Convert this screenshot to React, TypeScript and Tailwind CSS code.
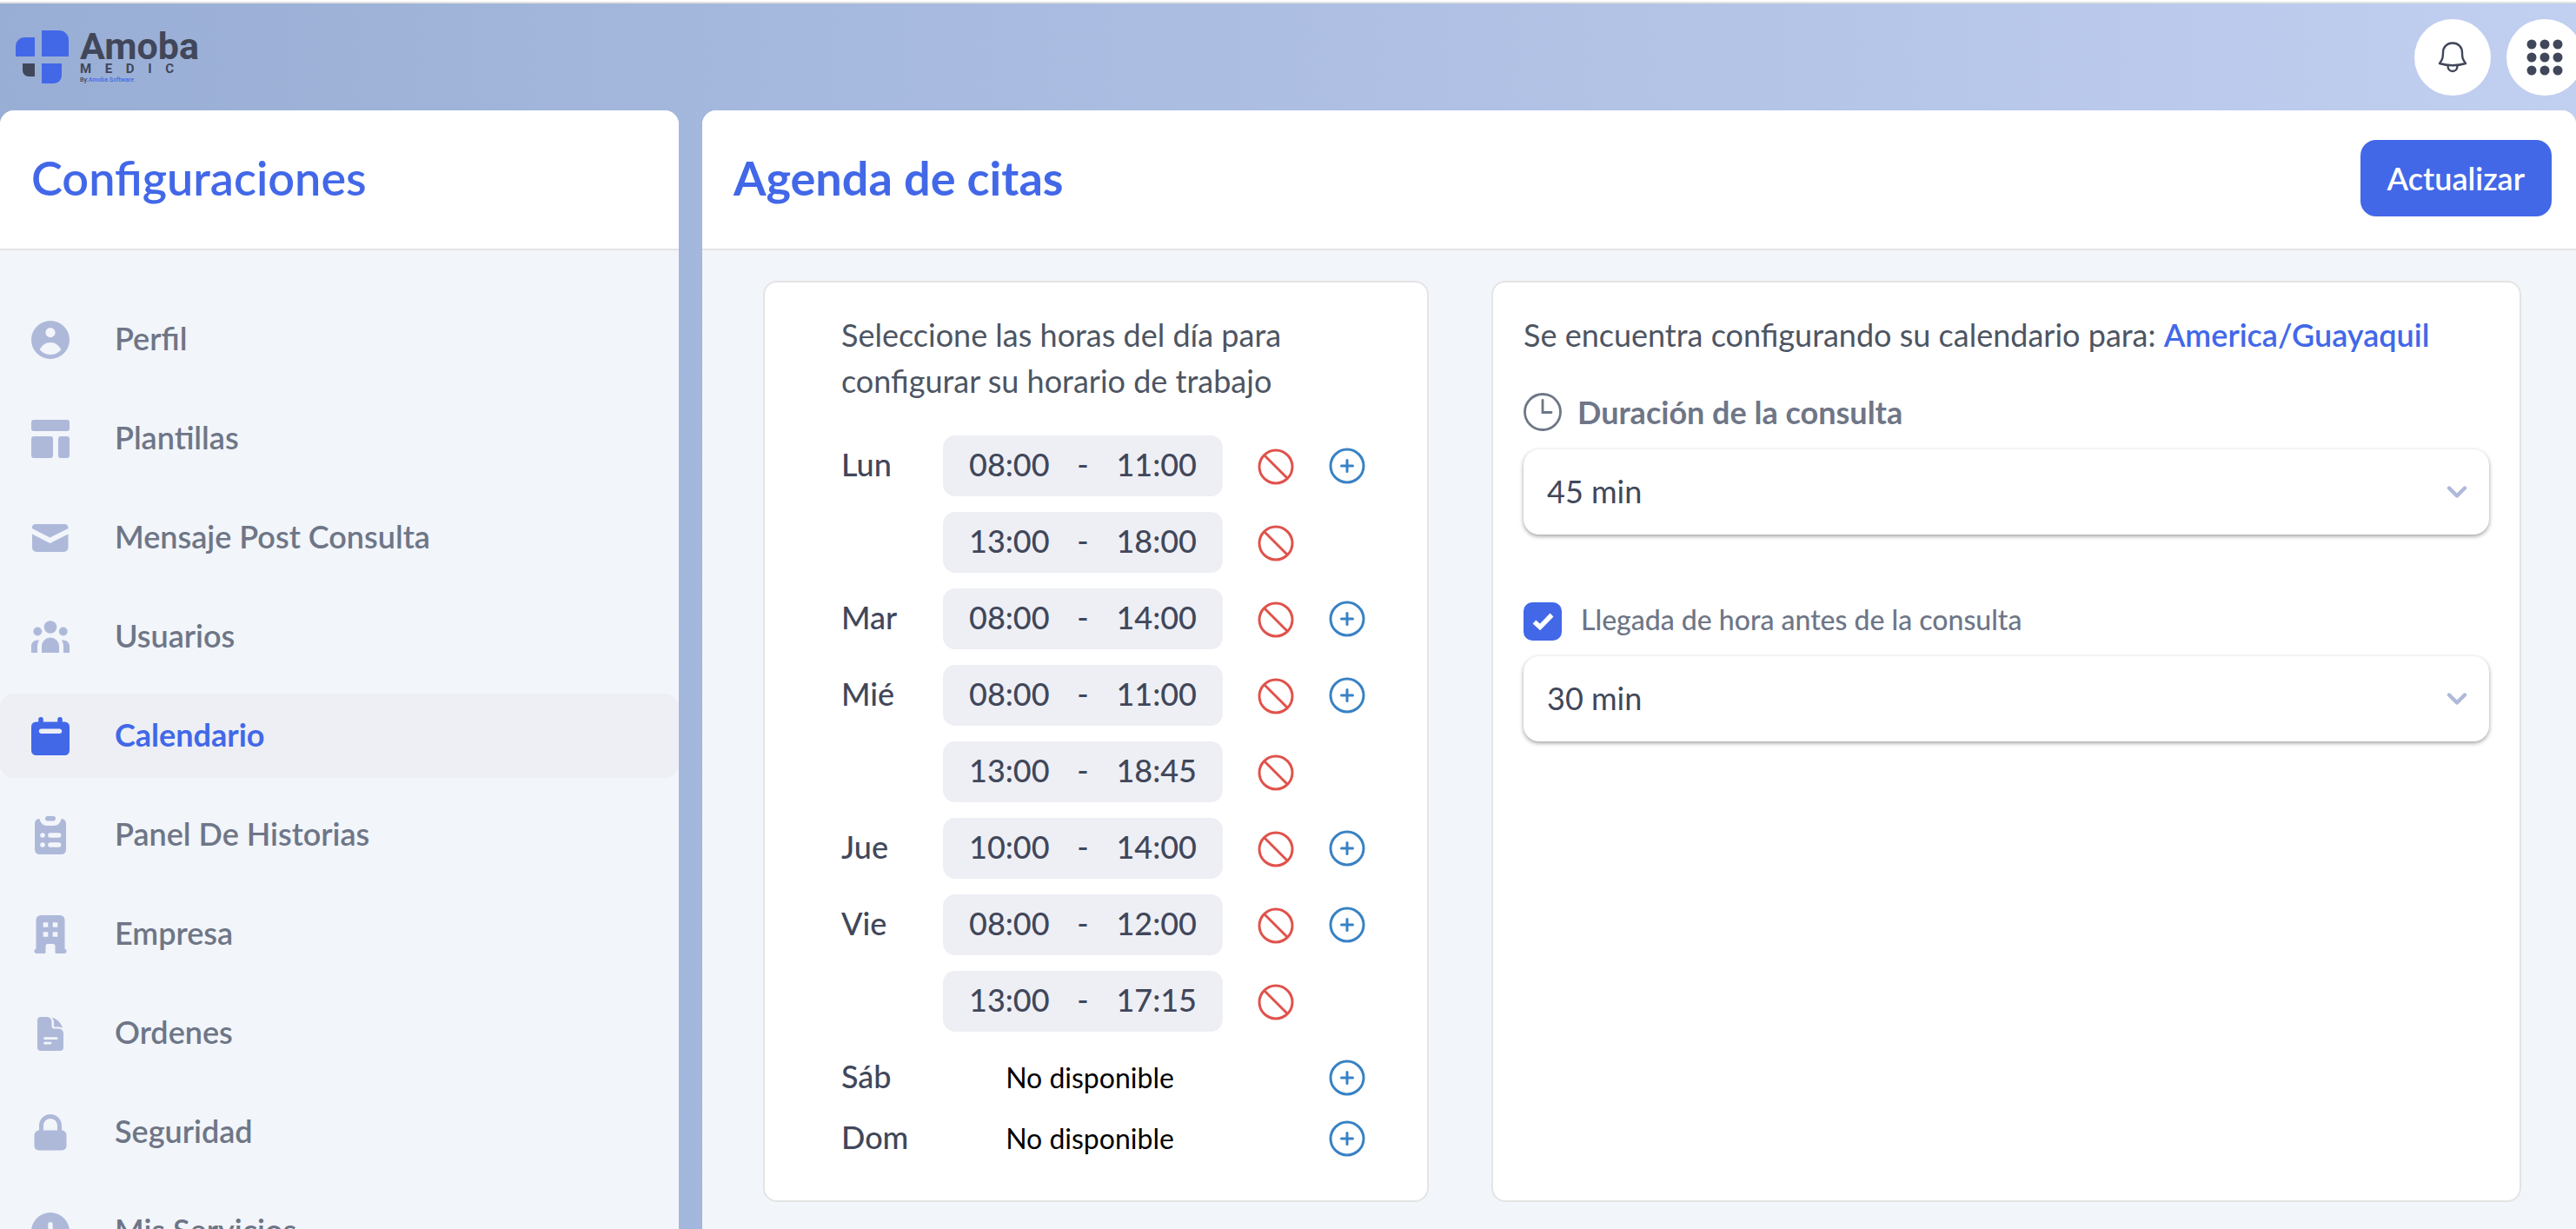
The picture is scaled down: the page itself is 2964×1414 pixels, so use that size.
import React, { useState } from "react";

type Slot = {
  start: string;
  end: string;
};

type Day = {
  name: string;
  slots: Slot[];
};

const initialDays: Day[] = [
  {
    name: "Lun",
    slots: [
      { start: "08:00", end: "11:00" },
      { start: "13:00", end: "18:00" },
    ],
  },
  { name: "Mar", slots: [{ start: "08:00", end: "14:00" }] },
  {
    name: "Mié",
    slots: [
      { start: "08:00", end: "11:00" },
      { start: "13:00", end: "18:45" },
    ],
  },
  { name: "Jue", slots: [{ start: "10:00", end: "14:00" }] },
  {
    name: "Vie",
    slots: [
      { start: "08:00", end: "12:00" },
      { start: "13:00", end: "17:15" },
    ],
  },
  { name: "Sáb", slots: [] },
  { name: "Dom", slots: [] },
];

const durations = ["15 min", "30 min", "45 min", "60 min"];

// Sidebar icons, all on a 44x44 grid
const icons = {
  profile: (
    <path
      fillRule="evenodd"
      d="M22 0a22 22 0 1 0 0 44a22 22 0 1 0 0-44zM22 8a5.500 5.500 0 1 1 0 11.200a5.500 5.500 0 1 1 0-11.200zM22 25c5.500 0 10 3.500 12.300 8.200c-3 3.600-7.300 5.800-12.300 5.800s-9.300-2.200-12.300-5.800c2.300-4.700 6.800-8.200 12.300-8.200z"
    />
  ),
  templates: (
    <>
      <rect x="0" y="0" width="44" height="13" rx="3" />
      <rect x="0" y="19" width="25" height="25" rx="3" />
      <rect x="31" y="19" width="13" height="25" rx="3" />
    </>
  ),
  mail: (
    <>
      <path d="M1 11v-1a4 4 0 0 1 4-4h33a4 4 0 0 1 4.500 4v1l-21 10.500z" />
      <path d="M1 17.500l20.500 10.500l21-10.500v15.500a5 5 0 0 1-5 5h-31.500a5 5 0 0 1-5-5z" />
    </>
  ),
  users: (
    <>
      <circle cx="22" cy="10.500" r="7.300" />
      <circle cx="7.300" cy="15.500" r="4.900" />
      <circle cx="36.700" cy="15.500" r="4.900" />
      <path d="M12 40v-7.500a10 10 0 0 1 20 0v7.500z" />
      <path d="M0 40v-7.500c0-4.500 4-7.500 9-6.800c-1.200 2-2 4.300-2 6.800v7.500z" />
      <path d="M44 40v-7.500c0-4.500-4-7.500-9-6.800c1.200 2 2 4.300 2 6.800v7.500z" />
    </>
  ),
  calendar: (
    <path
      fillRule="evenodd"
      d="M11 0a2.800 2.800 0 0 1 2.800 2.800v2.700h16.400v-2.700a2.800 2.800 0 0 1 5.600 0v2.700h2.700a5.500 5.500 0 0 1 5.500 5.500v27.500a5.500 5.500 0 0 1-5.500 5.500h-33a5.500 5.500 0 0 1-5.500-5.500v-27.500a5.500 5.500 0 0 1 5.500-5.500h2.700v-2.700a2.800 2.800 0 0 1 2.800-2.800zM11 13.500a2.800 2.800 0 0 0 0 5.500h22a2.800 2.800 0 0 0 0-5.500z"
    />
  ),
  histories: (
    <>
      <rect x="16" y="0" width="12" height="5.500" rx="2.750" />
      <path
        fillRule="evenodd"
        d="M9.500 3c.8 4.600 4 8 8.500 8h8c4.500 0 7.700-3.400 8.500-8c3.300 0 5.500 2.500 5.500 5.500v30a5.500 5.500 0 0 1-5.500 5.500h-25a5.500 5.500 0 0 1-5.500-5.500v-30c0-3 2.200-5.500 5.500-5.500zM13 19.200a2.800 2.800 0 1 0 0 5.600a2.800 2.800 0 1 0 0-5.600zM22 19.200a2.800 2.800 0 0 0 0 5.600h9.500a2.800 2.800 0 0 0 0-5.600zM13 30.200a2.800 2.800 0 1 0 0 5.600a2.800 2.800 0 1 0 0-5.600zM22 30.200a2.800 2.800 0 0 0 0 5.600h9.500a2.800 2.800 0 0 0 0-5.600z"
      />
    </>
  ),
  company: (
    <path
      fillRule="evenodd"
      d="M11 0h22a5.500 5.500 0 0 1 5.500 5.500v33.200a2.700 2.700 0 0 1 0 5.300h-9.500a1.500 1.500 0 0 1-1.500-1.500v-7a2.500 2.500 0 0 0-2.500-2.500h-6a2.500 2.500 0 0 0-2.500 2.500v7a1.500 1.500 0 0 1-1.500 1.500h-9.500a2.700 2.700 0 0 1 0-5.300v-33.200a5.500 5.500 0 0 1 5.500-5.500zM13.700 8.200v5.600h5.600v-5.600zM24.700 8.200v5.600h5.600v-5.600zM13.700 19.200v5.600h5.600v-5.600zM24.700 19.200v5.600h5.600v-5.600z"
    />
  ),
  orders: (
    <>
      <path
        fillRule="evenodd"
        d="M11 3h6c4 0 6.500 2 6.500 6v4.500a3 3 0 0 0 3 3h4.500c4 0 6 2.500 6 6v15.500a4 4 0 0 1-4 4h-22a4 4 0 0 1-4-4v-31a4 4 0 0 1 4-4zM15.500 26.300a1.400 1.400 0 0 0 0 2.800h13.500a1.400 1.400 0 0 0 0-2.800zM15.500 31.800a1.400 1.400 0 0 0 0 2.800h6.500a1.400 1.400 0 0 0 0-2.800z"
      />
      <path d="M23.500 3.500c6 1.500 11 6.500 12.500 12.500c-1.500-1-3-1.500-5-1.500h-3.500a1.500 1.500 0 0 1-1.500-1.500v-4c0-2.200-1-4-2.500-5.500z" />
    </>
  ),
  security: (
    <path
      fillRule="evenodd"
      d="M22 1c-7.200 0-13 5.800-13 13v5.500a5.500 5.500 0 0 0-5.500 5v13a5 5 0 0 0 5 5h27a5 5 0 0 0 5-5v-13a5.500 5.500 0 0 0-5.500-5v-5.500c0-7.200-5.800-13-13-13zM22 6c-4.400 0-8 3.600-8 8v5.500h16v-5.500c0-4.400-3.600-8-8-8z"
    />
  ),
  services: (
    <path
      fillRule="evenodd"
      d="M22 0a22 22 0 1 0 0 44a22 22 0 1 0 0-44zM22 11a2.700 2.700 0 0 1 2.700 2.700v5.600h5.600a2.700 2.700 0 0 1 0 5.400h-5.600v5.600a2.700 2.700 0 0 1-5.400 0v-5.600h-5.600a2.700 2.700 0 0 1 0-5.400h5.600v-5.600a2.700 2.700 0 0 1 2.700-2.700z"
    />
  ),
};

const menuItems: { label: string; icon: keyof typeof icons }[] = [
  { label: "Perfil", icon: "profile" },
  { label: "Plantillas", icon: "templates" },
  { label: "Mensaje Post Consulta", icon: "mail" },
  { label: "Usuarios", icon: "users" },
  { label: "Calendario", icon: "calendar" },
  { label: "Panel De Historias", icon: "histories" },
  { label: "Empresa", icon: "company" },
  { label: "Ordenes", icon: "orders" },
  { label: "Seguridad", icon: "security" },
  { label: "Mis Servicios", icon: "services" },
];

const Logo = () => (
  <a href="#" className="flex items-start" aria-label="Amoba Medic">
    <svg width="62" height="62" viewBox="0 0 62 62" fill="#4268e8">
      <path d="M22 8v22h-22v-12a10 10 0 0 1 10-10z" />
      <path d="M30 0h20a11 11 0 0 1 11 11v19h-31z" />
      <path d="M8 38h14v15h-7a7 7 0 0 1-7-7z" fill="#41475a" />
      <path d="M30 38h23v14a9 9 0 0 1-9 9h-14z" />
    </svg>
    <div className="ml-3 font-[Roboto,sans-serif] text-[#41475a]">
      <div className="h-9 text-[43px] font-bold leading-9">Amoba</div>
      <div className="flex h-4 w-[108px] justify-between text-[15px] font-bold leading-4">
        <span>M</span>
        <span>E</span>
        <span>D</span>
        <span>I</span>
        <span>C</span>
      </div>
      <div className="whitespace-nowrap text-[7px] font-medium leading-[10px]">
        By:<span className="text-[#4268e8]">Amoba Software</span>
      </div>
    </div>
  </a>
);

const Header = () => (
  <header className="flex h-[123px] shrink-0 items-center justify-between pl-[18px]">
    <Logo />
    <div className="-mr-2 flex gap-[18px]">
      <button
        aria-label="Notificaciones"
        className="flex size-[88px] items-center justify-center rounded-full bg-white"
      >
        <svg
          width="36"
          height="36"
          viewBox="0 0 36 36"
          fill="none"
          stroke="#41475a"
          strokeWidth="2.400"
          strokeLinejoin="round"
        >
          <path d="M18 1.500c-6.500 0-11 4.500-11 11c0 5.500-.5 8-4 12.500c5 1.500 10 2.200 15 2.200s10-.7 15-2.200c-3.500-4.500-4-7-4-12.500c0-6.500-4.500-11-11-11z" />
          <path d="M12.500 27.500c0 4 2.300 6.500 5.500 6.500s5.500-2.500 5.500-6.500" />
        </svg>
      </button>
      <button
        aria-label="Aplicaciones"
        className="flex size-[88px] items-center justify-center rounded-full bg-white"
      >
        <svg width="42" height="42" viewBox="0 0 42 42" fill="#41475a">
          {[6, 21, 36].map((y) =>
            [6, 21, 36].map((x) => (
              <circle key={`${x}-${y}`} cx={x} cy={y} r="5.500" />
            ))
          )}
        </svg>
      </button>
    </div>
  </header>
);

const Sidebar = () => {
  const [active, setActive] = useState("Calendario");

  return (
    <aside className="flex w-[781px] shrink-0 flex-col overflow-hidden rounded-t-2xl bg-[#f2f5fa]">
      <div className="flex h-[161px] shrink-0 items-center border-b-2 border-[#e4e4e4] bg-white px-9 pb-1">
        <h1 className="text-[54px] font-semibold leading-[64px] text-[#4268e8]">
          Configuraciones
        </h1>
      </div>
      <nav className="flex flex-col gap-[17px] pt-[54px]">
        {menuItems.map((item) => (
          <a
            key={item.label}
            href="#"
            onClick={() => setActive(item.label)}
            className={`flex h-[97px] shrink-0 items-center gap-[52px] rounded-2xl px-9 text-[36px] leading-[44px] ${
              active === item.label
                ? "bg-[#eeeff5] font-bold text-[#4268e8]"
                : "font-semibold text-[#6e7687]"
            }`}
          >
            <svg
              width="44"
              height="44"
              viewBox="0 0 44 44"
              className={
                active === item.label ? "fill-[#4268e8]" : "fill-[#aeb9da]"
              }
            >
              {icons[item.icon]}
            </svg>
            <span className="pb-1">{item.label}</span>
          </a>
        ))}
      </nav>
    </aside>
  );
};

const BanIcon = () => (
  <svg
    width="42"
    height="42"
    viewBox="0 0 42 42"
    fill="none"
    stroke="#e0524b"
    strokeWidth="3"
  >
    <circle cx="21" cy="21" r="19" />
    <path d="M8 8l26 26" />
  </svg>
);

const AddIcon = () => (
  <svg
    width="42"
    height="42"
    viewBox="0 0 42 42"
    fill="none"
    stroke="#3882c4"
    strokeWidth="3"
    strokeLinecap="round"
  >
    <circle cx="21" cy="21" r="19" />
    <path d="M21 14.500v13M14.500 21h13" />
  </svg>
);

const Schedule = () => {
  const [days, setDays] = useState(initialDays);

  const addSlot = (name: string) => {
    setDays(
      days.map((day) =>
        day.name === name
          ? { ...day, slots: [...day.slots, { start: "08:00", end: "12:00" }] }
          : day
      )
    );
  };

  const removeSlot = (name: string, index: number) => {
    setDays(
      days.map((day) =>
        day.name === name
          ? { ...day, slots: day.slots.filter((_, i) => i !== index) }
          : day
      )
    );
  };

  return (
    <section className="rounded-2xl border-2 border-[#e4e4e4] bg-white pb-9 pl-[88px] pr-16 pt-[34px] text-[36px]">
      <p className="mb-9 leading-[53px] text-[#4d5562]">
        Seleccione las horas del día para
        <br />
        configurar su horario de trabajo
      </p>
      {days.map((day) => (
        <div
          key={day.name}
          className="flex font-medium leading-[44px] text-[#41475a]"
        >
          <div className="flex h-[70px] w-[117px] shrink-0 items-center pb-1">
            {day.name}
          </div>
          <div className="w-[404px] shrink-0">
            {day.slots.length === 0 ? (
              <div className="flex h-[70px] w-[338px] items-center justify-center text-[32px] font-normal text-black">
                No disponible
              </div>
            ) : (
              day.slots.map((slot, index) => (
                <div key={index} className="mb-[18px] flex items-center">
                  <button className="flex h-[70px] w-[323px] items-center justify-between rounded-[14px] bg-[#eeeff5] px-[30px] pb-1">
                    <span>{slot.start}</span>
                    <span>-</span>
                    <span>{slot.end}</span>
                  </button>
                  <button
                    aria-label="Eliminar horario"
                    onClick={() => removeSlot(day.name, index)}
                    className="ml-10 pt-0.5"
                  >
                    <BanIcon />
                  </button>
                </div>
              ))
            )}
          </div>
          <button
            aria-label={`Agregar horario ${day.name}`}
            onClick={() => addSlot(day.name)}
            className="ml-10 flex h-[70px] items-center"
          >
            <AddIcon />
          </button>
        </div>
      ))}
    </section>
  );
};

type SelectProps = {
  id: string;
  value: string;
  onChange: (value: string) => void;
};

const Select = ({ id, value, onChange }: SelectProps) => (
  <div className="relative">
    <select
      id={id}
      value={value}
      onChange={(e) => onChange(e.target.value)}
      className="block h-[98px] w-full appearance-none rounded-[18px] bg-white px-[27px] pb-0.5 text-[36px] text-[#41475a] shadow-[0_2px_5px_rgba(0,0,0,0.38)] focus:outline-none"
    >
      {durations.map((duration) => (
        <option key={duration} value={duration}>
          {duration}
        </option>
      ))}
    </select>
    <svg
      width="24"
      height="16"
      viewBox="0 0 24 16"
      fill="none"
      stroke="#aeb9da"
      strokeWidth="4.400"
      strokeLinecap="round"
      strokeLinejoin="round"
      className="pointer-events-none absolute right-[25px] top-[41px]"
    >
      <path d="M3 3.500l9 9l9-9" />
    </svg>
  </div>
);

const Settings = () => {
  const [duration, setDuration] = useState("45 min");
  const [early, setEarly] = useState(true);
  const [arrival, setArrival] = useState("30 min");

  return (
    <section className="rounded-2xl border-2 border-[#e4e4e4] bg-white px-[35px] pt-[34px]">
      <p className="text-[36px] leading-[53px] text-[#4d5562]">
        Se encuentra configurando su calendario para:{" "}
        <span className="font-semibold text-[#4268e8]">America/Guayaquil</span>
      </p>

      <label
        htmlFor="duration"
        className="mb-[21px] mt-10 flex h-11 items-center gap-[18px] text-[36px] font-bold leading-[44px] text-[#6e7687]"
      >
        <svg
          width="44"
          height="44"
          viewBox="0 0 44 44"
          fill="none"
          stroke="#6e7687"
          strokeWidth="2.800"
          strokeLinecap="round"
        >
          <circle cx="22" cy="22" r="20.500" />
          <path d="M22 8.500v14h10" />
        </svg>
        Duración de la consulta
      </label>
      <Select id="duration" value={duration} onChange={setDuration} />

      <div className="mb-[18px] mt-[78px] flex h-11 items-center gap-[22px]">
        <div className="relative size-11">
          <input
            id="early"
            type="checkbox"
            checked={early}
            onChange={(e) => setEarly(e.target.checked)}
            className="block size-11 appearance-none rounded-[10px] border-2 border-[#4268e8] bg-white checked:bg-[#4268e8]"
          />
          {early && (
            <svg
              width="44"
              height="44"
              viewBox="0 0 44 44"
              fill="none"
              stroke="#fff"
              strokeWidth="5.500"
              className="pointer-events-none absolute inset-0"
            >
              <path d="M12.500 22.500l6.500 6l13.500-14" />
            </svg>
          )}
        </div>
        <label
          htmlFor="early"
          className="pb-1 text-[32px] font-medium leading-[40px] text-[#6e7687]"
        >
          Llegada de hora antes de la consulta
        </label>
      </div>
      <Select id="arrival" value={arrival} onChange={setArrival} />
    </section>
  );
};

const App = () => {
  return (
    <div className="flex h-screen flex-col overflow-hidden border-t-2 border-white bg-linear-to-r from-[#99aed5] to-[#c1cff0] font-[Lato,sans-serif]">
      <div className="h-0.5 shrink-0 bg-[#e0e2e0]" />
      <Header />
      <div className="flex min-h-0 flex-1 gap-[27px]">
        <Sidebar />
        <main className="flex min-w-0 flex-1 flex-col overflow-hidden rounded-t-2xl bg-[#f2f5fa]">
          <div className="flex h-[161px] shrink-0 items-center justify-between border-b-2 border-[#e4e4e4] bg-white pb-1 pl-9 pr-7">
            <h2 className="text-[54px] font-bold leading-[64px] text-[#4268e8]">
              Agenda de citas
            </h2>
            <button className="h-[88px] rounded-[18px] bg-[#4268e8] px-[31px] text-[36px] font-semibold text-white">
              Actualizar
            </button>
          </div>
          <div className="grid grid-cols-[766fr_1185fr] gap-[72px] pl-[70px] pr-[63px] pt-[35px]">
            <Schedule />
            <Settings />
          </div>
        </main>
      </div>
    </div>
  );
};

export default App;
